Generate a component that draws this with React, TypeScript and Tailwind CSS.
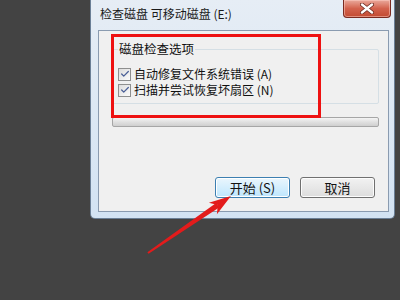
import { Check } from "lucide-react";

const cjk = { fontFamily: '"Noto Sans CJK SC", "Noto Sans", sans-serif' };

function CheckRow({ label }: { label: string }) {
  return (
    <div className="flex items-center gap-[3px] h-[16px]">
      <div className="w-[13px] h-[13px] border border-[#8e8f8f] bg-gradient-to-br from-[#dcdcdc] to-[#fbfbfb] flex items-center justify-center">
        <Check className="w-[10px] h-[10px] text-[#4a5f97]" strokeWidth={3} />
      </div>
      <span className="text-[12px] leading-none text-[#111]">{label}</span>
    </div>
  );
}

function Btn({ label, focused }: { label: string; focused?: boolean }) {
  return (
    <div
      className={`w-[75px] h-[21px] rounded-[3px] border flex items-center justify-center text-[13px] text-[#111] ${
        focused
          ? "border-[#3c7fb1] bg-gradient-to-b from-[#eaf6fd] to-[#bee6fd] shadow-[inset_0_0_0_1px_#fff]"
          : "border-[#707070] bg-gradient-to-b from-[#f2f2f2] to-[#dddddd] shadow-[inset_0_0_0_1px_#fcfcfc]"
      }`}
    >
      {label}
    </div>
  );
}

export default function App() {
  return (
    <div className="relative w-[400px] h-[300px] bg-[#434343] overflow-hidden" style={cjk}>
      {/* window */}
      <div className="ml-[90px] w-[305px] h-[219px] flex flex-col bg-gradient-to-b from-[#e6edf5] to-[#d3e3f3] border border-[#6b7f96] rounded-b-[5px] border-t-0">
        <div className="h-[30px] flex items-start justify-between">
          <span className="mt-[5px] ml-[9px] text-[12px] text-[#1a1a1a]">检查磁盘 可移动磁盘 (E:)</span>
          <div className="mr-[3px] w-[48px] h-[18px] rounded-b-[4px] border border-t-0 border-[#7a2a20] bg-gradient-to-b from-[#e9a99c] via-[#d3624d] to-[#c24a31] flex items-center justify-center shadow-[inset_0_0_0_1px_rgba(255,210,200,0.5)]">
            <svg width="14" height="11" viewBox="0 0 14 11">
              <path d="M2 1.5 L12 9.5 M12 1.5 L2 9.5" stroke="#6b2a20" strokeWidth="4" strokeLinecap="round" />
              <path d="M2 1.5 L12 9.5 M12 1.5 L2 9.5" stroke="#fff" strokeWidth="2.4" strokeLinecap="round" />
            </svg>
          </div>
        </div>
        <div className="ml-[7px] mr-[5px] h-[182px] border border-[#8a9bb0] bg-[#f0f0f0] flex flex-col pl-[13px] pr-[10px]">
          {/* group box */}
          <div className="relative mt-[18px] w-[267px] h-[55px] border border-[#d5dfe5] rounded-[2px] pl-[5px] pt-[16px] flex flex-col">
            <span className="absolute -top-[8px] left-[5px] bg-[#f0f0f0] px-[1px] text-[12.5px] leading-[14px] text-[#111]">磁盘检查选项</span>
            <CheckRow label="自动修复文件系统错误 (A)" />
            <CheckRow label="扫描并尝试恢复坏扇区 (N)" />
          </div>
          <div className="mt-[13px] w-[267px] h-[10px] rounded-[2px] border border-[#a6a6a6] bg-gradient-to-b from-[#f4f4f4] via-[#e0e0e0] to-[#cfcfcf]" />
          <div className="mt-[50px] flex justify-end gap-[10px] pr-[3px]">
            <Btn label="开始 (S)" focused />
            <Btn label="取消" />
          </div>
        </div>
      </div>

      {/* annotation box */}
      <div className="absolute left-[111px] top-[34px] w-[210px] h-[84px] border-[3px] border-[#ee1111]" />

      {/* annotation arrow */}
      <svg className="absolute left-0 top-0" width="400" height="300" viewBox="0 0 400 300">
        <polygon points="147.4,252.2 148.6,253.8 219.5,207.2 216.1,203.0" fill="#e31b1b" />
        <polygon points="231,196 216.9,214.3 217.8,205.1 208.9,202.7" fill="#e31b1b" />
      </svg>
    </div>
  );
}
